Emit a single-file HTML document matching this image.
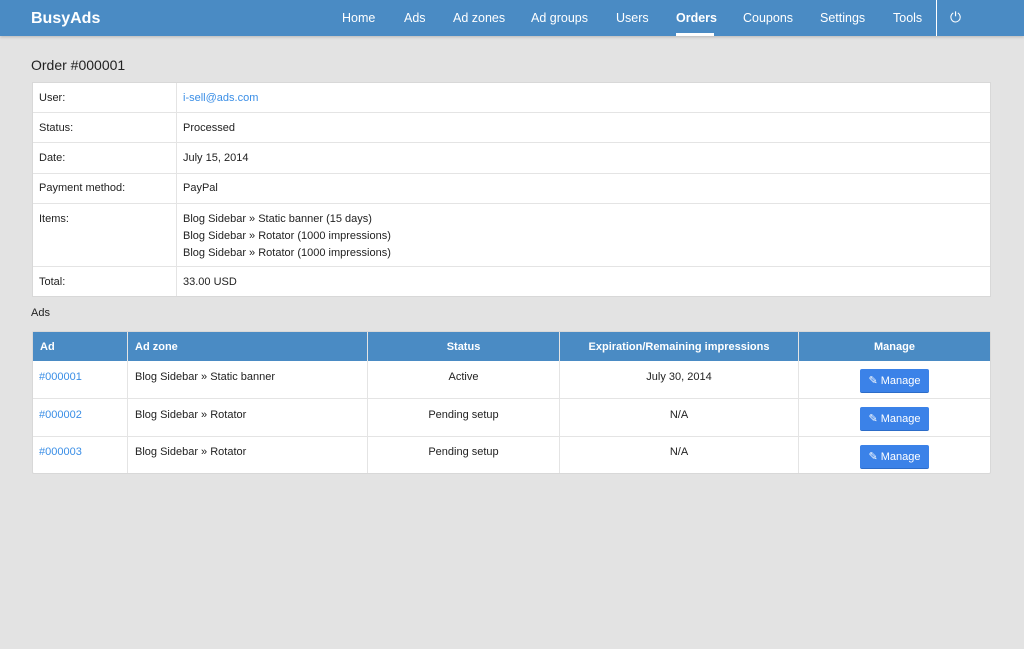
<!DOCTYPE html>
<html><head><style>
*{margin:0;padding:0;box-sizing:border-box}
body{width:1024px;height:649px;background:#e3e3e3;font-family:"Liberation Sans",sans-serif;font-size:11px;color:#222;position:relative;overflow:hidden}
.nav{position:absolute;left:0;top:0;width:1024px;height:36px;background:#4a8bc4;box-shadow:0 1px 3px rgba(0,0,0,.2)}
.nav span{position:absolute;top:11px;color:#fff;font-size:12.5px}
.brand{left:31px;top:10px!important;font-size:16px!important;font-weight:bold}
.t{position:absolute;background:#fff;border:1px solid #d8d8d8}
a{color:#3a8ee6;text-decoration:none}
.btn{position:absolute;background:#3b82e8;color:#fff;border-radius:2px;width:69px;height:24px;line-height:24px;text-align:center;font-size:11px;border-bottom:1px solid #2c6cc8}
</style></head><body>
<div class="nav">
<span class="brand">BusyAds</span>
<span style="left:342px">Home</span><span style="left:404px">Ads</span><span style="left:453px">Ad zones</span><span style="left:531px">Ad groups</span><span style="left:616px">Users</span><span style="left:676px;font-weight:bold">Orders</span><span style="left:743px">Coupons</span><span style="left:820px">Settings</span><span style="left:893px">Tools</span>
<div style="position:absolute;left:676px;top:33px;width:38px;height:3px;background:#fff"></div>
<div style="position:absolute;left:936px;top:0;width:1px;height:36px;background:#fff"></div>
<span style="left:950px;top:9px;font-size:14px!important">⏻</span>
</div>
<div style="position:absolute;left:31px;top:57px;font-size:14px">Order #000001</div>
<div class="t" style="left:32px;top:82px;width:959px;height:215px">
<div style="position:absolute;left:143px;top:0;width:1px;height:213px;background:#e4e4e4"></div>
<div style="position:absolute;left:6px;top:9px">User:</div><div style="position:absolute;left:150px;top:9px"><a>i-sell@ads.com</a></div>
<div style="position:absolute;left:0;top:29px;width:957px;height:1px;background:#e4e4e4"></div>
<div style="position:absolute;left:6px;top:39px">Status:</div><div style="position:absolute;left:150px;top:39px">Processed</div>
<div style="position:absolute;left:0;top:59px;width:957px;height:1px;background:#e4e4e4"></div>
<div style="position:absolute;left:6px;top:69px">Date:</div><div style="position:absolute;left:150px;top:69px">July 15, 2014</div>
<div style="position:absolute;left:0;top:90px;width:957px;height:1px;background:#e4e4e4"></div>
<div style="position:absolute;left:6px;top:99px">Payment method:</div><div style="position:absolute;left:150px;top:99px">PayPal</div>
<div style="position:absolute;left:0;top:120px;width:957px;height:1px;background:#e4e4e4"></div>
<div style="position:absolute;left:6px;top:130px">Items:</div><div style="position:absolute;left:150px;top:128px;line-height:17px">Blog Sidebar » Static banner (15 days)<br>Blog Sidebar » Rotator (1000 impressions)<br>Blog Sidebar » Rotator (1000 impressions)</div>
<div style="position:absolute;left:0;top:183px;width:957px;height:1px;background:#e4e4e4"></div>
<div style="position:absolute;left:6px;top:193px">Total:</div><div style="position:absolute;left:150px;top:193px">33.00 USD</div>
</div>
<div style="position:absolute;left:31px;top:307px">Ads</div>
<div class="t" style="left:32px;top:331px;width:959px;height:143px;border-radius:2px">
<div style="position:absolute;left:0;top:0;width:957px;height:29px;background:#4a8bc4;color:#fff;font-weight:bold">
<span style="position:absolute;left:7px;top:9px">Ad</span><span style="position:absolute;left:102px;top:9px">Ad zone</span>
<span style="position:absolute;left:335px;width:191px;text-align:center;top:9px">Status</span>
<span style="position:absolute;left:527px;width:238px;text-align:center;top:9px">Expiration/Remaining impressions</span>
<span style="position:absolute;left:766px;width:191px;text-align:center;top:9px">Manage</span>
</div>
<div style="position:absolute;left:94px;top:0;width:1px;height:141px;background:#e4e4e4"></div>
<div style="position:absolute;left:334px;top:0;width:1px;height:141px;background:#e4e4e4"></div>
<div style="position:absolute;left:526px;top:0;width:1px;height:141px;background:#e4e4e4"></div>
<div style="position:absolute;left:765px;top:0;width:1px;height:141px;background:#e4e4e4"></div>
<div style="position:absolute;left:0;top:66px;width:957px;height:1px;background:#e4e4e4"></div>
<div style="position:absolute;left:0;top:104px;width:957px;height:1px;background:#e4e4e4"></div>
<div style="position:absolute;left:6px;top:39px"><a>#000001</a></div><div style="position:absolute;left:102px;top:39px">Blog Sidebar » Static banner</div>
<div style="position:absolute;left:335px;width:191px;text-align:center;top:39px">Active</div><div style="position:absolute;left:527px;width:238px;text-align:center;top:39px">July 30, 2014</div>
<div class="btn" style="left:827px;top:37px">✎ Manage</div>
<div style="position:absolute;left:6px;top:77px"><a>#000002</a></div><div style="position:absolute;left:102px;top:77px">Blog Sidebar » Rotator</div>
<div style="position:absolute;left:335px;width:191px;text-align:center;top:77px">Pending setup</div><div style="position:absolute;left:527px;width:238px;text-align:center;top:77px">N/A</div>
<div class="btn" style="left:827px;top:75px">✎ Manage</div>
<div style="position:absolute;left:6px;top:114px"><a>#000003</a></div><div style="position:absolute;left:102px;top:114px">Blog Sidebar » Rotator</div>
<div style="position:absolute;left:335px;width:191px;text-align:center;top:114px">Pending setup</div><div style="position:absolute;left:527px;width:238px;text-align:center;top:114px">N/A</div>
<div class="btn" style="left:827px;top:113px">✎ Manage</div>
</div>
</body></html>
